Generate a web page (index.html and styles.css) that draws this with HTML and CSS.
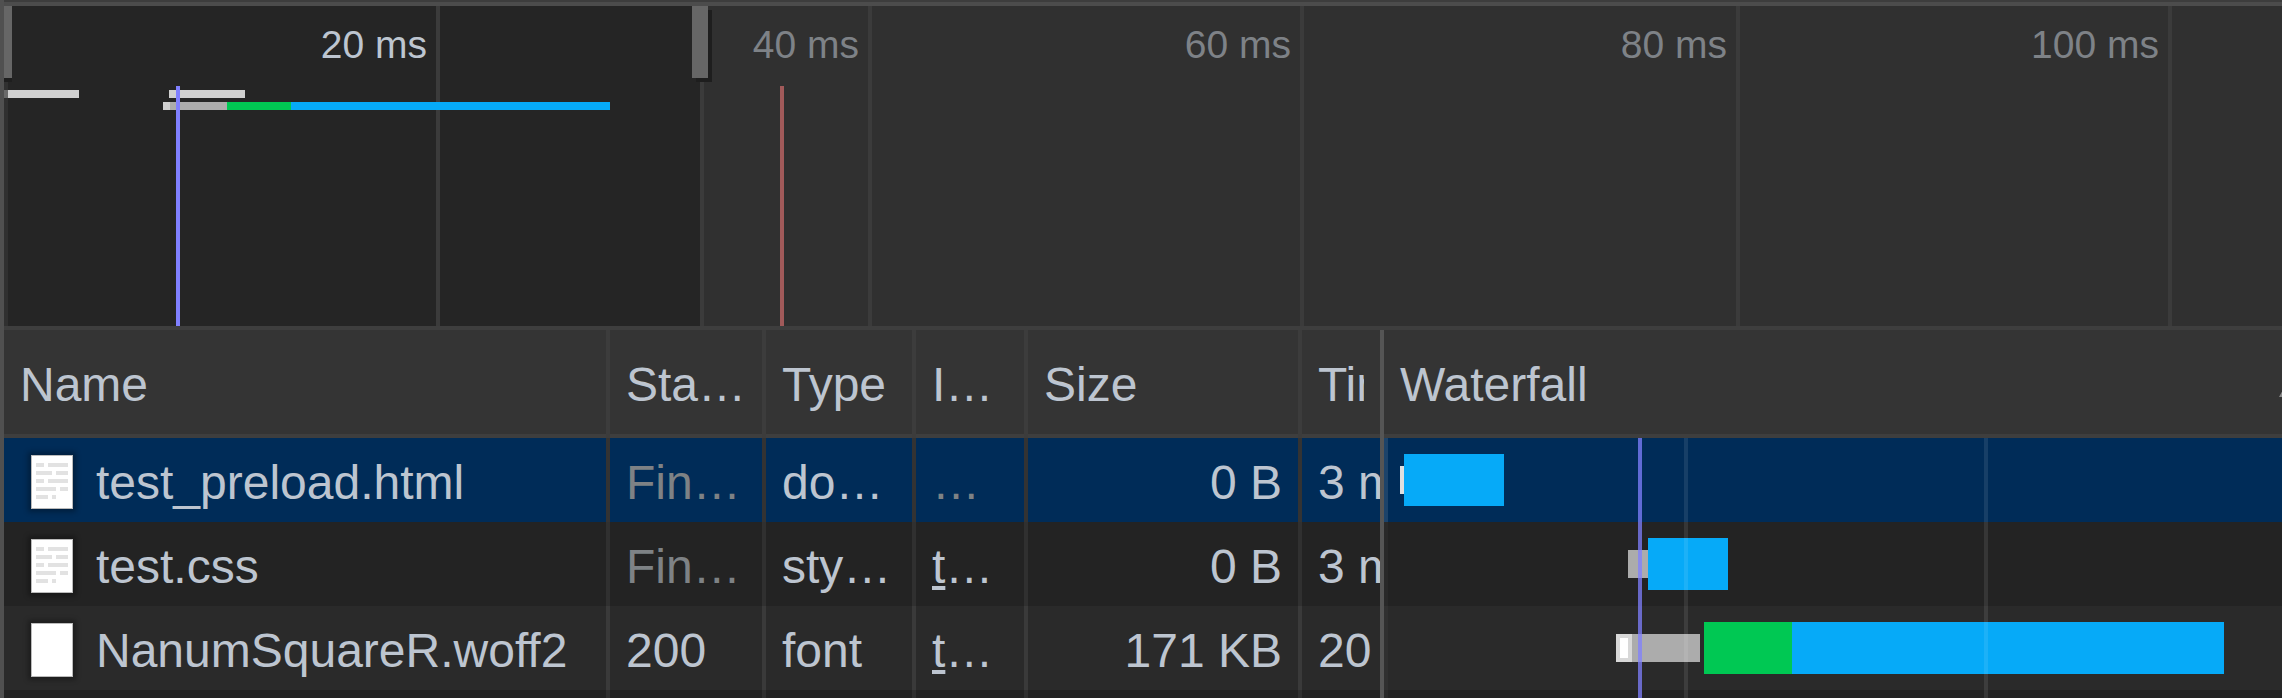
FILE: index.html
```html
<!DOCTYPE html>
<html lang="en">
<head>
    <meta charset="UTF-8">
    <title>Network</title>
    <link rel="stylesheet" href="styles.css">
</head>
<body>
    <div id="panel">
        <div id="overview">
            <div class="ov-window"></div>
            <div class="ov-ticks">
                <div class="tick tick-active">20 ms</div>
                <div class="tick">40 ms</div>
                <div class="tick">60 ms</div>
                <div class="tick tick-wide">80 ms</div>
                <div class="tick">100 ms</div>
            </div>
            <div class="handle handle-left"></div>
            <div class="handle handle-right"></div>
            <div class="ov-edge"></div>

            <div class="ov-bar" style="left:0;top:84px;width:4px;background:#6a6a6a"></div>
            <div class="ov-bar" style="left:4px;top:84px;width:71px"></div>
            <div class="ov-bar" style="left:165px;top:84px;width:76px"></div>
            <div class="ov-bar" style="left:159px;top:96px;width:7px"></div>
            <div class="ov-bar ov-wait" style="left:166px;top:96px;width:57px"></div>
            <div class="ov-bar ov-green" style="left:223px;top:96px;width:64px"></div>
            <div class="ov-bar ov-blue" style="left:287px;top:96px;width:319px"></div>
            <div class="ov-line ov-dom" style="left:172px"></div>
            <div class="ov-line ov-load" style="left:776px"></div>
        </div>

        <div class="row row-head">
            <div class="cell">Name</div>
            <div class="cell">Sta…</div>
            <div class="cell">Type</div>
            <div class="cell">I…</div>
            <div class="cell">Size</div>
            <div class="cell cell-cut"><span class="clip">Time</span></div>
            <div class="cell-fall">Waterfall<span class="sort-mark"></span></div>
        </div>

        <div class="row row-selected">
            <div class="cell cell-name">
                <svg class="file-icon" viewBox="0 0 40 52"><rect width="40" height="52" fill="#fff"/><path class="doc-lines" d="M4 7h8v4H4zM16 7h20v4H16zM4 15h16v4H4zM24 15h12v4H24zM4 23h8v4H4zM16 23h20v4H16zM4 31h20v4H4zM28 31h8v4h-8zM4 39h12v4H4zM20 39h4v4h-4z"/></svg>
                <span>test_preload.html</span>
            </div>
            <div class="cell cell-dim">Fin…</div>
            <div class="cell">do…</div>
            <div class="cell cell-dim">…</div>
            <div class="cell cell-num">0 B</div>
            <div class="cell cell-cut"><span class="clip">3 ms</span></div>
            <div class="cell-fall fall">
                <i class="fall-stub" style="left:16px;width:4px"></i>
                <i class="fall-blue" style="left:20px;width:100px"></i>
            </div>
        </div>

        <div class="row row-even">
            <div class="cell cell-name">
                <svg class="file-icon" viewBox="0 0 40 52"><rect width="40" height="52" fill="#fff"/><path class="doc-lines" d="M4 7h8v4H4zM16 7h20v4H16zM4 15h16v4H4zM24 15h12v4H24zM4 23h8v4H4zM16 23h20v4H16zM4 31h20v4H4zM28 31h8v4h-8zM4 39h12v4H4zM20 39h4v4h-4z"/></svg>
                <span>test.css</span>
            </div>
            <div class="cell cell-dim">Fin…</div>
            <div class="cell">sty…</div>
            <div class="cell"><span class="link">t</span>…</div>
            <div class="cell cell-num">0 B</div>
            <div class="cell cell-cut"><span class="clip">3 ms</span></div>
            <div class="cell-fall fall">
                <i class="fall-wait" style="left:244px;width:20px"></i>
                <i class="fall-blue" style="left:264px;width:80px"></i>
            </div>
        </div>

        <div class="row row-odd">
            <div class="cell cell-name">
                <svg class="file-icon" viewBox="0 0 40 52"><rect width="40" height="52" fill="#fff"/></svg>
                <span>NanumSquareR.woff2</span>
            </div>
            <div class="cell">200</div>
            <div class="cell">font</div>
            <div class="cell"><span class="link">t</span>…</div>
            <div class="cell cell-num">171 KB</div>
            <div class="cell cell-cut"><span class="clip">20 ms</span></div>
            <div class="cell-fall fall">
                <i class="fall-queue" style="left:232px;width:16px"><b></b></i>
                <i class="fall-wait" style="left:248px;width:68px"></i>
                <i class="fall-green" style="left:320px;width:88px"></i>
                <i class="fall-blue" style="left:408px;width:432px"></i>
            </div>
        </div>

        <div class="row row-even">
            <div class="cell"></div>
            <div class="cell"></div>
            <div class="cell"></div>
            <div class="cell"></div>
            <div class="cell"></div>
            <div class="cell cell-cut"></div>
            <div class="cell-fall fall"></div>
        </div>

        <div class="fall-lines">
            <div class="fall-grid" style="left:300px"></div>
            <div class="fall-grid" style="left:600px"></div>
            <div class="fall-dom"></div>
        </div>
    </div>
</body>
</html>
```

FILE: styles.css
```css
html,
body{
    margin: 0;
    height: 698px;
    overflow: hidden;
    background: #232323;
}
#panel{
    position: relative;
    height: 698px;
    border-left: 4px solid #505050;
    box-sizing: border-box;
    font-family: "Liberation Sans", Arial, sans-serif;
    font-size: 48px;
    color: #bdc5d0;
    background: #232323;
    overflow: hidden;
}

/* overview */
#overview{
    position: relative;
    height: 320px;
    margin-top: 6px;
    background: #303030;
    border-bottom: 4px solid #3e3e3e;
    box-shadow: 0 -4px 0 #4c4c4c, 0 -6px 0 #3d3d3d;
}
.ov-window{
    position: absolute;
    left: 4px;
    top: 0;
    width: 692px;
    height: 320px;
    background: #252525;
}
.ov-ticks{
    position: relative;
    display: flex;
    height: 320px;
}
.tick{
    flex: none;
    width: 432px;
    box-sizing: border-box;
    padding: 16px 9px 0 0;
    border-right: 4px solid #3b3b3b;
    text-align: right;
    font-size: 39px;
    line-height: 46px;
    color: #7e8287;
}
.tick-active{
    width: 436px;
    color: #bdc5d0;
}
.tick-wide{
    width: 436px;
}
.handle{
    position: absolute;
    top: 0;
    height: 72px;
    background: #666;
    box-shadow: 4px 4px 0 #1e1e1e;
}
.handle-left{
    left: 0;
    width: 8px;
    box-shadow: 0 4px 0 #1e1e1e;
}
.handle-right{
    left: 688px;
    width: 16px;
}
.ov-edge{
    position: absolute;
    left: 696px;
    top: 76px;
    width: 4px;
    height: 244px;
    background: #3b3b3b;
}
.ov-bar{
    position: absolute;
    height: 8px;
    background: #d0d0d0;
}
.ov-wait{
    background: #acacac;
}
.ov-green{
    background: #00c853;
}
.ov-blue{
    background: #06aaf8;
}
.ov-line{
    position: absolute;
    top: 80px;
    width: 4px;
    height: 240px;
}
.ov-dom{
    background: #8080ff;
}
.ov-load{
    background: #a15a5a;
}

/* table */
.row{
    display: grid;
    grid-template-columns: 606px 156px 150px 112px 274px 82px 1fr;
    height: 84px;
    line-height: 89px;
    box-sizing: border-box;
}
.row-head{
    height: 108px;
    line-height: 109px;
    background: #343434;
    border-bottom: 4px solid #3e3e3e;
}
.row-selected{
    background: #002c58;
}
.row-even{
    background: #232323;
}
.row-odd{
    background: #2a2a2a;
}
.cell{
    min-width: 0;
    padding: 0 16px;
    border-right: 4px solid #3c3c3c;
    white-space: nowrap;
    overflow: hidden;
}
.row-selected .cell{
    border-right-color: #333;
}
.row-even .cell{
    border-right-color: #303030;
}
.row-odd .cell{
    border-right-color: #3a3a3a;
}
.cell-name{
    display: flex;
    align-items: flex-start;
    padding-left: 28px;
}
.cell-name span{
    margin-left: 24px;
}
.file-icon{
    flex: none;
    width: 40px;
    height: 52px;
    margin-top: 18px;
    box-shadow: 0 0 0 1px #bbb, 0 0 5px 4px rgba(0,0,0,.3);
}
.doc-lines{
    fill: #e2e2e2;
}
.cell-dim{
    color: #7e8285;
}
.cell-num{
    text-align: right;
}
#panel .cell-cut{
    padding-right: 0;
    border-right-color: #555;
}
#panel .row-head .cell-cut{
    padding-right: 16px;
}
.clip{
    display: block;
    overflow: hidden;
}
.link{
    text-decoration: underline;
}
.cell-fall{
    position: relative;
    min-width: 0;
    padding-left: 16px;
}
.sort-mark{
    position: absolute;
    right: -7px;
    top: 58px;
    border-left: 5px solid transparent;
    border-right: 5px solid transparent;
    border-bottom: 9px solid #8a8a8a;
}

/* waterfall */
.fall{
    padding: 0;
    box-shadow: inset 4px 0 0 rgba(255,255,255,.03);
}
.row-selected .fall{
    box-shadow: inset 4px 0 0 rgba(255,255,255,.11);
}
.fall i{
    position: absolute;
    display: block;
}
.fall-blue{
    top: 16px;
    height: 52px;
    background: #06aaf8;
}
.fall-green{
    top: 16px;
    height: 52px;
    background: #00c853;
}
.fall-wait{
    top: 28px;
    height: 28px;
    background: #acacac;
}
.fall-stub{
    top: 28px;
    height: 28px;
    background: #dfdfdf;
}
.fall-queue{
    top: 28px;
    height: 28px;
    background: #d8d8d8;
}
.fall-queue b{
    display: block;
    width: 8px;
    height: 20px;
    margin: 4px;
    background: #fff;
}
.fall-lines{
    position: absolute;
    left: 1380px;
    top: 438px;
    right: 0;
    bottom: 0;
    pointer-events: none;
}
.fall-grid{
    position: absolute;
    top: 0;
    bottom: 0;
    width: 4px;
    background: rgba(255,255,255,.09);
}
.fall-dom{
    position: absolute;
    left: 254px;
    top: 0;
    bottom: 0;
    width: 4px;
    background: rgba(128,128,255,.75);
}
```
